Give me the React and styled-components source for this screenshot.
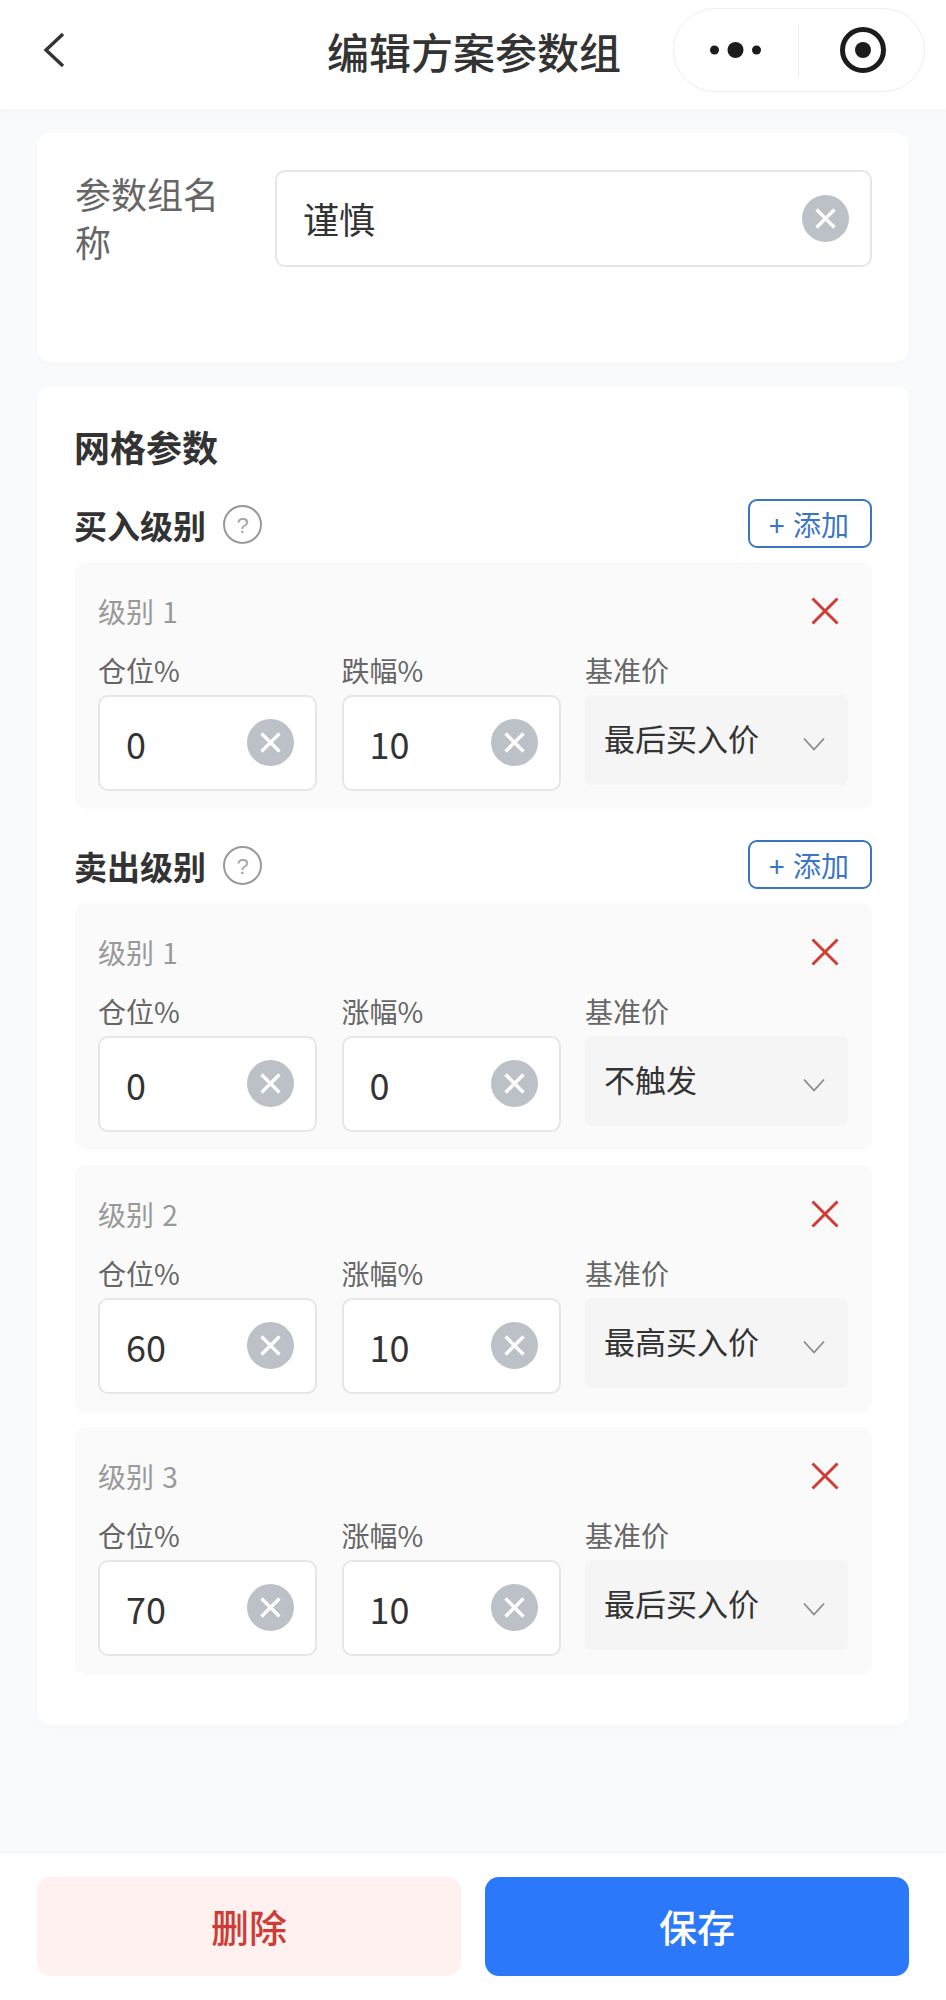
import React from "react"
import styled, { createGlobalStyle } from "styled-components"

const GlobalStyle = createGlobalStyle`
  html, body {
    margin: 0;
    padding: 0;
    background: #f9fafc;
  }
  * {
    box-sizing: border-box;
  }
`

const Page = styled.div`
  display: flex;
  flex-direction: column;
  height: 2000px;
  overflow: hidden;
  background: #f9fafc;
  font-family: "Noto Sans CJK SC", "Noto Sans", sans-serif;
  color: #333;
`

const NavBar = styled.header`
  display: flex;
  align-items: center;
  flex: 0 0 109px;
  padding: 0 21px 0 42px;
  background: #fff;
  box-shadow: 0 2px 6px rgba(0, 0, 0, 0.03);
`

const BackIcon = styled.svg`
  width: 24px;
  height: 36px;
  margin-top: -10px;
`

const NavTitle = styled.h1`
  flex: 1;
  margin: -7px 0 0 261px;
  font-size: 42px;
  line-height: 56px;
  font-weight: 500;
  color: #333;
  white-space: nowrap;
`

const Capsule = styled.div`
  display: flex;
  align-items: center;
  width: 252px;
  height: 84px;
  margin-top: -9px;
  border: 1px solid #eeeeee;
  border-radius: 42px;
  background: #fff;
`

const CapsuleSide = styled.div`
  display: flex;
  align-items: center;
  justify-content: center;
  width: ${props => (props.$right ? "127px" : "124px")};
  height: 52px;

  & + & {
    padding-left: 3px;
    border-left: 1px solid #eeeeee;
  }
`

const Content = styled.main`
  display: flex;
  flex-direction: column;
  gap: 24px;
  flex: 1;
  padding: 24px 37px 0;
`

const Card = styled.section`
  padding: ${props => props.$padding};
  height: ${props => props.$height || "auto"};
  background: #fff;
  border-radius: 14px;
  box-shadow: 0 2px 6px rgba(0, 0, 0, 0.02);
`

const NameRow = styled.div`
  display: flex;
  gap: 39px;
`

const NameLabel = styled.label`
  flex: 0 0 161px;
  margin-top: -1px;
  font-size: 36px;
  line-height: 48px;
  color: #666;
`

const InputBox = styled.div`
  display: flex;
  align-items: center;
  justify-content: space-between;
  flex: ${props => (props.$large ? "1" : "none")};
  min-width: 0;
  height: ${props => (props.$large ? "97px" : "96px")};
  padding: 0 21px 0 26px;
  background: #fff;
  border: 2px solid #e6e6e8;
  border-radius: 10px;
`

const InputValue = styled.span`
  margin-top: -1px;
  font-size: 36px;
  line-height: 48px;
  color: #333;
`

const ClearBadge = styled.svg`
  flex: none;
  width: 47px;
  height: 47px;
  margin-top: -1px;
`

const SectionTitle = styled.h2`
  margin: 0 0 28px -1px;
  font-size: 36px;
  line-height: 50px;
  font-weight: 700;
  color: #333;
`

const GroupHeader = styled.div`
  display: flex;
  align-items: center;
  height: 49px;
  margin-bottom: 14px;
`

const GroupTitle = styled.h3`
  margin: 3px 17px 0 -1px;
  font-size: 33px;
  line-height: 46px;
  font-weight: 700;
  color: #333;
`

const HelpIcon = styled.svg`
  width: 39px;
  height: 39px;
  margin-top: 1px;
`

const AddButton = styled.button`
  margin-left: auto;
  width: 124px;
  height: 49px;
  padding: 0 2px 0 0;
  background: #fff;
  border: 2px solid #3a75c4;
  border-radius: 9px;
  font-family: inherit;
  font-size: 28px;
  line-height: 40px;
  word-spacing: 2px;
  color: #3a75c4;
`

const LevelList = styled.div`
  display: flex;
  flex-direction: column;
  gap: 15px;
  margin-bottom: ${props => props.$gap};
`

const LevelPanel = styled.div`
  height: 247px;
  padding: 31px 24px 0 23px;
  background: #fafafa;
  border-radius: 10px;
`

const LevelHead = styled.div`
  display: flex;
  align-items: center;
  justify-content: space-between;
  height: 36px;
  margin-bottom: 24px;
`

const LevelName = styled.span`
  font-size: 28px;
  line-height: 36px;
  word-spacing: 2px;
  color: #999;
`

const RemoveIcon = styled.svg`
  width: 28px;
  height: 28px;
  margin-right: 9px;
`

const FieldGrid = styled.div`
  display: grid;
  grid-template-columns: 219px 219px 263px;
  column-gap: 24.5px;
`

const Field = styled.div`
  display: flex;
  flex-direction: column;
`

const FieldLabel = styled.label`
  height: 38px;
  margin-bottom: 4px;
  font-size: 28px;
  line-height: 34px;
  color: #666;
`

const SelectBox = styled.div`
  display: flex;
  align-items: center;
  justify-content: space-between;
  height: 90px;
  padding: 0 23px 0 19px;
  background: #f5f5f6;
  border-radius: 6px;
`

const SelectValue = styled.span`
  margin-top: -4px;
  font-size: 31px;
  line-height: 42px;
  color: #333;
`

const ChevronIcon = styled.svg`
  width: 22px;
  height: 14px;
  margin-top: 8px;
`

const Footer = styled.footer`
  display: flex;
  gap: 24px;
  flex: 0 0 147px;
  padding: 24px 37px;
  background: #fff;
  box-shadow: 0 -1px 3px rgba(0, 0, 0, 0.03);
`

const FooterButton = styled.button`
  flex: 1;
  height: 99px;
  padding: 0 0 2px;
  border: none;
  border-radius: 14px;
  font-family: inherit;
  font-size: 38px;
  font-weight: 500;
  background: ${props => (props.$primary ? "#2b78fb" : "#fef1ef")};
  color: ${props => (props.$primary ? "#fff" : "#cf3b35")};
`

const buyLevels = [
  { name: "级别 1", position: "0", change: "10", base: "最后买入价" },
]

const sellLevels = [
  { name: "级别 1", position: "0", change: "0", base: "不触发" },
  { name: "级别 2", position: "60", change: "10", base: "最高买入价" },
  { name: "级别 3", position: "70", change: "10", base: "最后买入价" },
]

const ClearIcon = () => (
  <ClearBadge viewBox="0 0 47 47">
    <circle cx="23.5" cy="23.5" r="23.5" fill="#bcc0c7" />
    <path d="M14.5 14.5l18 18M32.5 14.5l-18 18" stroke="#fff" strokeWidth="3.4" fill="none" />
  </ClearBadge>
)

const TextField = ({ value, large }) => (
  <InputBox $large={large}>
    <InputValue>{value}</InputValue>
    <ClearIcon />
  </InputBox>
)

const LevelRow = ({ level, changeLabel }) => (
  <LevelPanel>
    <LevelHead>
      <LevelName>{level.name}</LevelName>
      <RemoveIcon viewBox="0 0 28 28">
        <path d="M1.5 1.5l25 25M26.5 1.5l-25 25" stroke="#d03c34" strokeWidth="3" fill="none" />
      </RemoveIcon>
    </LevelHead>
    <FieldGrid>
      <Field>
        <FieldLabel>仓位%</FieldLabel>
        <TextField value={level.position} />
      </Field>
      <Field>
        <FieldLabel>{changeLabel}</FieldLabel>
        <TextField value={level.change} />
      </Field>
      <Field>
        <FieldLabel>基准价</FieldLabel>
        <SelectBox>
          <SelectValue>{level.base}</SelectValue>
          <ChevronIcon viewBox="0 0 22 14">
            <path d="M1 1.5l10 11 10-11" stroke="#8a8a8a" strokeWidth="1.8" fill="none" />
          </ChevronIcon>
        </SelectBox>
      </Field>
    </FieldGrid>
  </LevelPanel>
)

const LevelGroup = ({ title, levels, changeLabel, gap }) => (
  <>
    <GroupHeader>
      <GroupTitle>{title}</GroupTitle>
      <HelpIcon viewBox="0 0 39 39">
        <circle cx="19.5" cy="19.5" r="18.5" stroke="#999" strokeWidth="2" fill="none" />
        <text x="19.5" y="27.5" textAnchor="middle" fontSize="22" fill="#a6a6a6" fontFamily="Liberation Sans, sans-serif">?</text>
      </HelpIcon>
      <AddButton>+ 添加</AddButton>
    </GroupHeader>
    <LevelList $gap={gap}>
      {levels.map(level => (
        <LevelRow key={level.name} level={level} changeLabel={changeLabel} />
      ))}
    </LevelList>
  </>
)

const App = () => (
  <Page>
    <GlobalStyle />
    <NavBar>
      <BackIcon viewBox="0 0 24 36">
        <path d="M21 2L4 18l17 16" stroke="#333" strokeWidth="3.4" fill="none" />
      </BackIcon>
      <NavTitle>编辑方案参数组</NavTitle>
      <Capsule>
        <CapsuleSide>
          <svg width="51" height="16" viewBox="0 0 51 16">
            <circle cx="4.5" cy="8" r="4.5" fill="#1c1c1e" />
            <circle cx="25.5" cy="8" r="8" fill="#1c1c1e" />
            <circle cx="46.5" cy="8" r="4.5" fill="#1c1c1e" />
          </svg>
        </CapsuleSide>
        <CapsuleSide $right>
          <svg width="46" height="46" viewBox="0 0 46 46">
            <circle cx="23" cy="23" r="20.5" stroke="#1c1c1e" strokeWidth="5" fill="none" />
            <circle cx="23" cy="23" r="8" fill="#1c1c1e" />
          </svg>
        </CapsuleSide>
      </Capsule>
    </NavBar>

    <Content>
      <Card $padding="37px 37px 0 38px" $height="229px">
        <NameRow>
          <NameLabel>参数组名称</NameLabel>
          <TextField value="谨慎" large />
        </NameRow>
      </Card>

      <Card $padding="35px 37px 0 38px" $height="1339px">
        <SectionTitle>网格参数</SectionTitle>
        <LevelGroup title="买入级别" levels={buyLevels} changeLabel="跌幅%" gap="31px" />
        <LevelGroup title="卖出级别" levels={sellLevels} changeLabel="涨幅%" gap="0" />
      </Card>
    </Content>

    <Footer>
      <FooterButton>删除</FooterButton>
      <FooterButton $primary>保存</FooterButton>
    </Footer>
  </Page>
)

export default App
